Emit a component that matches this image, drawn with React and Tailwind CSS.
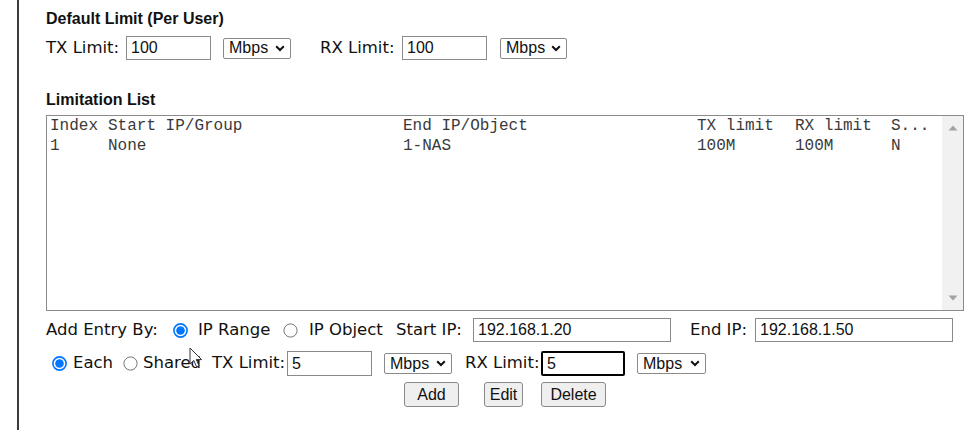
import React from 'react';

const sans = "font-['Liberation_Sans',Arial,sans-serif]";
const verdana = "font-['DejaVu_Sans',Verdana,sans-serif]";

const Radio = ({ checked }) => (
  <svg width="15" height="15" viewBox="0 0 15 15" className="shrink-0">
    {checked ? (
      <>
        <circle cx="7.5" cy="7.5" r="6.6" fill="#fff" stroke="#0075ff" strokeWidth="1.6" />
        <circle cx="7.5" cy="7.5" r="4.3" fill="#0075ff" />
      </>
    ) : (
      <circle cx="7.5" cy="7.5" r="6.6" fill="#fff" stroke="#767676" strokeWidth="1" />
    )}
  </svg>
);

const TextBox = ({ value, w, h = 'h-[24px]', focused }) => (
  <div
    className={`${w} ${h} shrink-0 flex items-center bg-white px-[4px] text-[16px] ${sans} ${
      focused ? 'border-2 border-black rounded-[2px] px-[3px]' : 'border border-[#8a8a8a]'
    }`}
  >
    {value}
  </div>
);

const Unit = ({ w = 'w-[68px]' }) => (
  <div
    className={`${w} h-[21px] flex items-center justify-between border border-[#8a8a8a] rounded-[2px] bg-white pl-[5px] pr-[5px] text-[16px] ${sans}`}
  >
    <span>Mbps</span>
    <svg width="10" height="7" viewBox="0 0 10 7">
      <path d="M1.2 1.3 L5 5 L8.8 1.3" fill="none" stroke="#111" strokeWidth="2" />
    </svg>
  </div>
);

const Button = ({ children, w }) => (
  <div
    className={`${w} h-[25px] flex items-center justify-center border border-[#8a8a8a] rounded-[3px] bg-[#efefef] text-[16px] ${sans}`}
  >
    {children}
  </div>
);

const rows = [
  ['Index', 'Start IP/Group', 'End IP/Object', 'TX limit', 'RX limit', 'S...'],
  ['1', 'None', '1-NAS', '100M', '100M', 'N'],
];

export default function App() {
  return (
    <div className="relative w-[977px] h-[430px] bg-white overflow-hidden text-[#111]">
      <div className="ml-[17px] h-full border-l-2 border-[#3c3c3c] pl-[27px] pt-[10px]">
        <div className="w-[918px]">
          <div className={`text-[16px] font-bold leading-[18px] ${sans}`}>Default Limit (Per User)</div>

          {/* default limit row */}
          <div className={`mt-[8px] flex items-center h-[24px] text-[16.5px] whitespace-nowrap ${verdana}`}>
            <span className="w-[80px]">TX Limit:</span>
            <TextBox value="100" w="w-[85px]" />
            <div className="ml-[12px]">
              <Unit />
            </div>
            <span className="ml-[29px] w-[82px]">RX Limit:</span>
            <TextBox value="100" w="w-[85px]" />
            <div className="ml-[13px]">
              <Unit w="w-[67px]" />
            </div>
          </div>

          <div className={`mt-[31px] text-[16px] font-bold leading-[18px] ${sans}`}>Limitation List</div>

          {/* list box */}
          <div className="mt-[6px] h-[196px] flex border border-[#8a8a8a] bg-white">
            <div className="flex-1 pl-[3px] font-['Liberation_Mono','Courier_New',monospace] text-[16px] leading-[20px] text-[#3a3a3a] whitespace-pre">
              {rows.map((r, i) => (
                <div key={i} className="flex">
                  <span className="w-[58px]">{r[0]}</span>
                  <span className="w-[295px]">{r[1]}</span>
                  <span className="w-[294px]">{r[2]}</span>
                  <span className="w-[98px]">{r[3]}</span>
                  <span className="w-[96px]">{r[4]}</span>
                  <span>{r[5]}</span>
                </div>
              ))}
            </div>
            <div className="w-[21px] bg-[#f1f1f1] flex flex-col items-center justify-between py-[9px]">
              <svg width="10" height="6" viewBox="0 0 10 6">
                <path d="M5 0.5 L9.5 5.5 L0.5 5.5 Z" fill="#a3a3a3" />
              </svg>
              <svg width="10" height="6" viewBox="0 0 10 6">
                <path d="M0.5 0.5 L9.5 0.5 L5 5.5 Z" fill="#a3a3a3" />
              </svg>
            </div>
          </div>

          {/* add entry row */}
          <div className={`mt-[7px] flex items-center h-[24px] text-[16.5px] whitespace-nowrap ${verdana}`}>
            <span className="w-[127px]">Add Entry By:</span>
            <Radio checked />
            <span className="ml-[10px] w-[85px]">IP Range</span>
            <Radio />
            <span className="ml-[11px] w-[87px]">IP Object</span>
            <span className="w-[77px]">Start IP:</span>
            <TextBox value="192.168.1.20" w="w-[198px]" />
            <span className="ml-[19px] w-[65px]">End IP:</span>
            <TextBox value="192.168.1.50" w="w-[198px]" />
          </div>

          {/* each / shared row */}
          <div className={`mt-[9px] flex items-center h-[25px] text-[16.5px] whitespace-nowrap ${verdana}`}>
            <span className="ml-[6px]">
              <Radio checked />
            </span>
            <span className="ml-[6px] w-[50px]">Each</span>
            <Radio />
            <span className="ml-[5px] w-[69px]">Shared</span>
            <span className="w-[75px]">TX Limit:</span>
            <TextBox value="5" w="w-[85px]" h="h-[25px]" />
            <div className="ml-[12px]">
              <Unit />
            </div>
            <span className="ml-[13px] w-[76px]">RX Limit:</span>
            <TextBox value="5" w="w-[84px]" h="h-[25px]" focused />
            <div className="ml-[12px]">
              <Unit w="w-[69px]" />
            </div>
          </div>

          {/* buttons */}
          <div className="mt-[6px] flex justify-center">
            <Button w="w-[55px]">Add</Button>
            <div className="ml-[25px]">
              <Button w="w-[39px]">Edit</Button>
            </div>
            <div className="ml-[18px]">
              <Button w="w-[65px]">Delete</Button>
            </div>
          </div>
        </div>
      </div>

      {/* mouse pointer */}
      <svg
        className="absolute left-[189px] top-[347px]"
        width="16"
        height="22"
        viewBox="0 0 16 22"
      >
        <path
          d="M1 1 L1 17 L4.8 13.4 L7.6 19.8 L10 18.8 L7.3 12.6 L12.6 12.6 Z"
          fill="#fff"
          stroke="#333"
          strokeWidth="1"
          strokeLinejoin="round"
        />
      </svg>
    </div>
  );
}
